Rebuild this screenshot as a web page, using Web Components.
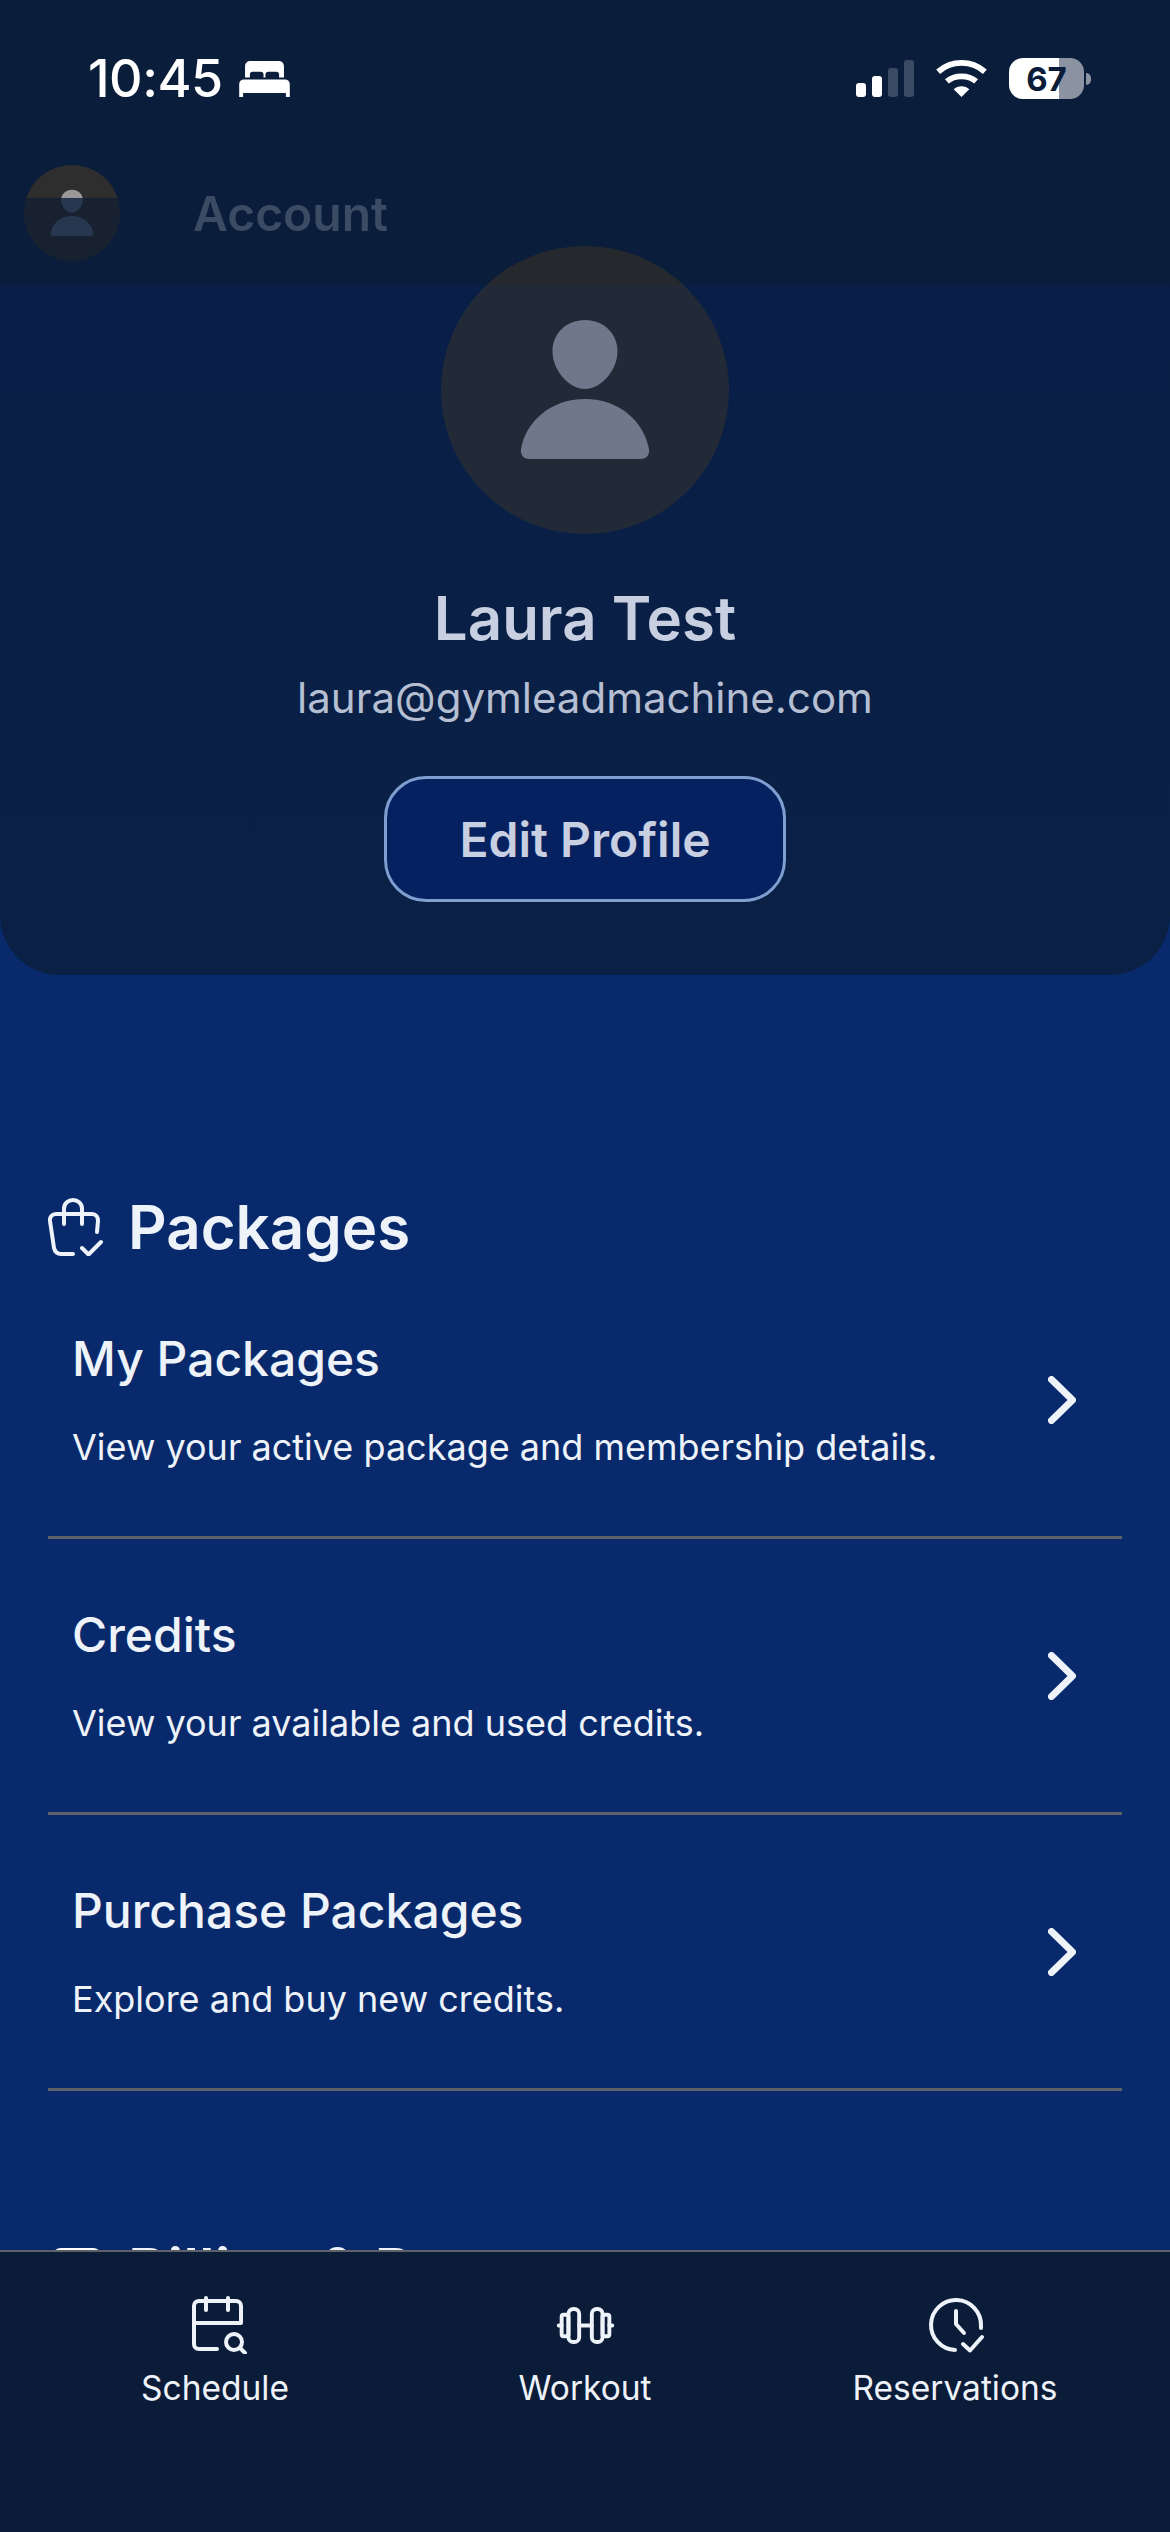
<!DOCTYPE html>
<html lang="en">
<head>
<meta charset="utf-8">
<title>Account</title>
<style>
  html, body { margin: 0; padding: 0; background: #082a6c; }
  body { font-family: Inter, "Liberation Sans", sans-serif; }
  menu-section + menu-section { margin-top: 143px; }
</style>
</head>
<body>
<account-screen>
  <profile-card slot="content" name="Laura Test" email="laura@gymleadmachine.com"></profile-card>
  <menu-section slot="content" title="Packages">
    <svg slot="icon" width="55" height="58" viewBox="0 0 55 58" fill="none" stroke="#eef2f9" stroke-width="4" stroke-linecap="round" stroke-linejoin="round">
      <path d="M25 56H13c-4 0-6-2-7-6L2 23c-.5-4 2-7 6-7h36c4 0 6 3 6 7l-1 11"/>
      <path d="M16 26V11c0-12 18-12 18 0v15"/>
      <path d="M34 50l6.500 6.500L53 44"/>
    </svg>
    <menu-row heading="My Packages" text="View your active package and membership details."></menu-row>
    <menu-row heading="Credits" text="View your available and used credits."></menu-row>
    <menu-row heading="Purchase Packages" text="Explore and buy new credits."></menu-row>
  </menu-section>
  <menu-section slot="content" title="Billing &amp; Payments">
    <svg slot="icon" width="55" height="58" viewBox="0 0 55 58" fill="none" stroke="#fff" stroke-width="4"><rect x="6" y="9" width="46" height="40" rx="7"/><path d="M6 22h46"/></svg>
  </menu-section>
</account-screen>

<script>
const personPath = 'M144 74c19 0 32.500 14 32.500 31 0 20-17 38-32.500 38s-32.500-18-32.500-38c0-17 13.500-31 32.500-31zM144 153c35 0 59 23 64 50 1 6-3 10-8 10H88c-5 0-9-4-8-10 5-27 29-50 64-50z';

const statusTpl = document.createElement('template');
statusTpl.innerHTML = `
  <style>
    :host {
      display: flex;
      justify-content: space-between;
      align-items: center;
      height: 198px;
      padding: 0 79px 41px 88px;
      box-sizing: border-box;
      color: #fff;
    }
    .left, .right { display: flex; align-items: center; }
    .time { font-size: 52px; font-weight: 500; letter-spacing: -.5px; }
    .left { gap: 16px; }
    .right { gap: 22px; }
    .battery {
      width: 75px;
      height: 41px;
      border-radius: 14px;
      background: linear-gradient(to right, #fff 67%, #8b93a3 67%);
      display: flex;
      align-items: center;
      justify-content: center;
      color: #0a1c39;
      font-size: 33px;
      font-weight: 700;
    }
    .batt { display: flex; align-items: center; gap: 2px; }
    .cap { width: 5px; height: 12px; border-radius: 0 6px 6px 0; background: #8b93a3; }
  </style>
  <div class="left">
    <span class="time">10:45</span>
    <svg width="51" height="36" viewBox="0 0 52 37" fill="#fff">
      <path d="M6 17V6c0-4 2-6 6-6h28c4 0 6 2 6 6v11h-5v-3c0-2-1-3-3-3h-8c-2 0-3 1-3 3v3h-2v-3c0-2-1-3-3-3h-8c-2 0-3 1-3 3v3z"/>
      <path d="M5 19h42c3 0 5 2 5 5v13h-4v-4H4v4H0V24c0-3 2-5 5-5z"/>
    </svg>
  </div>
  <div class="right">
    <svg width="58" height="37" viewBox="0 0 58 37">
      <rect x="0" y="23" width="10" height="14" rx="3" fill="#fff"/>
      <rect x="16" y="16" width="10" height="21" rx="3" fill="#fff"/>
      <rect x="32" y="8" width="10" height="29" rx="3" fill="#3c4b64"/>
      <rect x="48" y="0" width="10" height="37" rx="3" fill="#3c4b64"/>
    </svg>
    <svg width="51" height="37" viewBox="0 0 52 38" fill="none" stroke="#fff" stroke-width="6">
      <path d="M2 12c14-12 34-12 48 0"/>
      <path d="M11 22c8-7 22-7 30 0"/>
      <path d="M18 30l8 8 8-8c-4-4-12-4-16 0z" fill="#fff" stroke="none"/>
    </svg>
    <div class="batt"><div class="battery">67</div><div class="cap"></div></div>
  </div>
`;
class StatusBar extends HTMLElement {
  constructor() {
    super();
    this.attachShadow({ mode: 'open' }).appendChild(statusTpl.content.cloneNode(true));
  }
}
customElements.define('status-bar', StatusBar);

const headerTpl = document.createElement('template');
headerTpl.innerHTML = `
  <style>
    :host {
      display: block;
      position: absolute;
      top: 0;
      left: 0;
      right: 0;
      height: 285px;
      background: #0a1d3a;
      z-index: 2;
    }
    .bar {
      position: absolute;
      top: 165px;
      left: 24px;
      display: flex;
      align-items: center;
      gap: 73px;
    }
    .avatar {
      width: 96px;
      height: 96px;
      border-radius: 50%;
      background: linear-gradient(#2e2e2e 34%, #18212f 34%);
    }
    .avatar svg { display: block; }
    .title {
      font-size: 48px;
      font-weight: 600;
      background: linear-gradient(#fff 12%, #3c4b64 12%);
      -webkit-background-clip: text;
      background-clip: text;
      color: transparent;
    }
  </style>
  <status-bar></status-bar>
  <div class="bar">
    <div class="avatar">
      <svg width="96" height="96" viewBox="0 0 288 288">
        <defs>
          <linearGradient id="fade" x1="0" y1="0" x2="0" y2="288" gradientUnits="userSpaceOnUse">
            <stop offset=".34" stop-color="#999"/>
            <stop offset=".34" stop-color="#283750"/>
          </linearGradient>
        </defs>
        <path fill="url(#fade)" d=""/>
      </svg>
    </div>
    <div class="title">Account</div>
  </div>
`;
class AccountHeader extends HTMLElement {
  constructor() {
    super();
    const root = this.attachShadow({ mode: 'open' });
    root.appendChild(headerTpl.content.cloneNode(true));
    root.querySelector('path').setAttribute('d', personPath);
  }
}
customElements.define('account-header', AccountHeader);

const cardTpl = document.createElement('template');
cardTpl.innerHTML = `
  <style>
    :host {
      display: flex;
      flex-direction: column;
      align-items: center;
      padding-top: 246px;
      height: 975px;
      box-sizing: border-box;
      border-radius: 0 0 60px 60px;
      background: linear-gradient(#081e48, #0a2044);
    }
    .photo {
      position: relative;
      z-index: 3;
      width: 288px;
      height: 288px;
      border-radius: 50%;
      background: linear-gradient(#25292e 13.5%, #222a38 13.5%);
      flex: none;
    }
    .photo svg { display: block; }
    h2 {
      margin: 48px 0 0;
      font-size: 60px;
      line-height: 72px;
      font-weight: 600;
      color: #c8cfe0;
    }
    p {
      margin: 17px 0 0;
      font-size: 42px;
      line-height: 54px;
      color: #b6bfd1;
    }
    button {
      margin-top: 51px;
      width: 402px;
      height: 126px;
      border: 3px solid #7f9fd0;
      border-radius: 42px;
      background: #052160;
      color: #c8cfe0;
      font: 600 48px Inter, "Liberation Sans", sans-serif;
    }
  </style>
  <div class="photo">
    <svg width="288" height="288" viewBox="0 0 288 288"><path fill="#6e788a" d=""/></svg>
  </div>
  <h2></h2>
  <p></p>
  <button>Edit Profile</button>
`;
class ProfileCard extends HTMLElement {
  constructor() {
    super();
    const root = this.attachShadow({ mode: 'open' });
    root.appendChild(cardTpl.content.cloneNode(true));
    root.querySelector('path').setAttribute('d', personPath);
    root.querySelector('h2').textContent = this.getAttribute('name');
    root.querySelector('p').textContent = this.getAttribute('email');
  }
}
customElements.define('profile-card', ProfileCard);

const sectionTpl = document.createElement('template');
sectionTpl.innerHTML = `
  <style>
    :host {
      display: block;
      padding: 0 48px;
      margin-top: 216px;
      color: #eef2f9;
    }
    header {
      display: flex;
      align-items: center;
      gap: 25px;
      height: 72px;
    }
    h3 { margin: 0; font-size: 60px; font-weight: 600; white-space: nowrap; }
    .rows { display: flex; flex-direction: column; }
  </style>
  <header>
    <slot name="icon"></slot>
    <h3></h3>
  </header>
  <div class="rows"><slot></slot></div>
`;
class MenuSection extends HTMLElement {
  constructor() {
    super();
    const root = this.attachShadow({ mode: 'open' });
    root.appendChild(sectionTpl.content.cloneNode(true));
    root.querySelector('h3').textContent = this.getAttribute('title');
  }
}
customElements.define('menu-section', MenuSection);

const rowTpl = document.createElement('template');
rowTpl.innerHTML = `
  <style>
    :host {
      display: flex;
      align-items: center;
      justify-content: space-between;
      height: 276px;
      box-sizing: border-box;
      padding: 0 46px 0 24px;
      border-bottom: 3px solid #5e6166;
    }
    h4 { margin: 0 0 36px; font-size: 48px; line-height: 58px; font-weight: 500; }
    p { margin: 0; font-size: 36px; line-height: 46px; color: #eef2f9; }
    svg { flex: none; }
  </style>
  <div>
    <h4></h4>
    <p></p>
  </div>
  <svg width="28" height="48" viewBox="0 0 28 48" fill="none" stroke="#eef2f9" stroke-width="7" stroke-linecap="round" stroke-linejoin="round"><path d="M3.500 3.500L24.500 24L3.500 44.500"/></svg>
`;
class MenuRow extends HTMLElement {
  constructor() {
    super();
    const root = this.attachShadow({ mode: 'open' });
    root.appendChild(rowTpl.content.cloneNode(true));
    root.querySelector('h4').textContent = this.getAttribute('heading');
    root.querySelector('p').textContent = this.getAttribute('text');
  }
}
customElements.define('menu-row', MenuRow);

const tabTpl = document.createElement('template');
tabTpl.innerHTML = `
  <style>
    :host {
      display: flex;
      flex-direction: column;
      align-items: center;
      gap: 13px;
      color: #eef2f9;
      font-size: 33.500px;
      font-weight: 400;
    }
    .icon { height: 60px; display: flex; align-items: center; }
  </style>
  <div class="icon"><slot></slot></div>
  <span id="label"></span>
`;
class NavTab extends HTMLElement {
  constructor() {
    super();
    const root = this.attachShadow({ mode: 'open' });
    root.appendChild(tabTpl.content.cloneNode(true));
    root.getElementById('label').textContent = this.getAttribute('label');
  }
}
customElements.define('nav-tab', NavTab);

const navTpl = document.createElement('template');
navTpl.innerHTML = `
  <style>
    :host {
      display: grid;
      grid-template-columns: 1fr 1fr 1fr;
      justify-items: center;
      align-content: start;
      flex: none;
      height: 282px;
      box-sizing: border-box;
      padding: 43px 30px 0;
      background: #0b1c38;
      border-top: 2px solid #5e6166;
      position: relative;
      z-index: 1;
    }
  </style>
  <nav-tab label="Schedule">
    <svg style="margin-left:8px" width="56" height="58" viewBox="0 0 56 58" fill="none" stroke="#eef2f9" stroke-width="4" stroke-linecap="round" stroke-linejoin="round">
      <path d="M26 53H8c-3 0-5-2-5-5V10c0-3 2-5 5-5h37c3 0 5 2 5 5v17H3"/>
      <path d="M15 2v12M37 2v12"/>
      <circle cx="43" cy="46" r="8"/>
      <path d="M49 52l5 5"/>
    </svg>
  </nav-tab>
  <nav-tab label="Workout">
    <svg width="59" height="37" viewBox="0 0 59 38" fill="none" stroke="#eef2f9" stroke-width="4" stroke-linecap="round" stroke-linejoin="round">
      <rect x="5" y="8" width="7" height="22" rx="2"/>
      <rect x="12" y="2" width="11" height="34" rx="5"/>
      <rect x="36" y="2" width="11" height="34" rx="5"/>
      <rect x="47" y="8" width="7" height="22" rx="2"/>
      <path d="M23 19h13M2 19h3M54 19h3"/>
    </svg>
  </nav-tab>
  <nav-tab label="Reservations">
    <svg style="margin-left:2px" width="56" height="56" viewBox="0 0 56 56" fill="none" stroke="#eef2f9" stroke-width="4" stroke-linecap="round" stroke-linejoin="round">
      <path d="M27 53A25 25 0 1 1 53 29v2"/>
      <path d="M28 14v13l8 9"/>
      <path d="M35 47l7 6.500 12-13.500"/>
    </svg>
  </nav-tab>
`;
class BottomNav extends HTMLElement {
  constructor() {
    super();
    this.attachShadow({ mode: 'open' }).appendChild(navTpl.content.cloneNode(true));
  }
}
customElements.define('bottom-nav', BottomNav);

const screenTpl = document.createElement('template');
screenTpl.innerHTML = `
  <style>
    :host {
      display: flex;
      flex-direction: column;
      position: relative;
      width: 1170px;
      height: 2532px;
      overflow: hidden;
      background: #082a6c;
    }
    main { flex: 1; min-height: 0; overflow: hidden; }
  </style>
  <account-header></account-header>
  <main><slot name="content"></slot></main>
  <bottom-nav></bottom-nav>
`;
class AccountScreen extends HTMLElement {
  constructor() {
    super();
    this.attachShadow({ mode: 'open' }).appendChild(screenTpl.content.cloneNode(true));
  }
}
customElements.define('account-screen', AccountScreen);
</script>
</body>
</html>
